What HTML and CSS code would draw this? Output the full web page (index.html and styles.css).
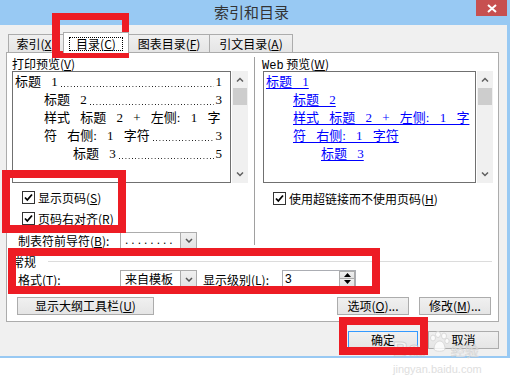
FILE: index.html
```html
<!DOCTYPE html>
<html lang="zh-CN">
<head>
    <meta charset="UTF-8" />
    <title>索引和目录</title>
    <link rel="stylesheet" href="styles.css">
</head>
<body>
<div class="window">
    <div class="titlebar">
        <span class="title">索引和目录</span>
        <span class="close">
            <svg width="10" height="9" viewBox="0 0 10 9"><path d="M1 1 L9 8 M9 1 L1 8" stroke="#fff" stroke-width="2"/></svg>
        </span>
    </div>
    <div class="client">
        <div class="tabs">
            <div class="tab tab-index">索引(<u>X</u>)</div>
            <div class="tab tab-toc active"><span class="focus">目录(<u>C</u>)</span></div>
            <div class="tab tab-figures">图表目录(<u>F</u>)</div>
            <div class="tab tab-cites">引文目录(<u>A</u>)</div>
        </div>
        <div class="panel">
            <div class="columns">
                <div class="col col-left">
                    <div class="caption">打印预览(<u>V</u>)</div>
                    <div class="listbox">
                        <div class="list list-print">
                            <div class="toc lv1"><span>标题 1</span><span class="leader"></span><span>1</span></div>
                            <div class="toc lv2"><span>标题 2</span><span class="leader"></span><span>3</span></div>
                            <div class="toc lv2">样式 标题 2 + 左侧: 1 字</div>
                            <div class="toc lv2"><span>符 右侧: 1 字符</span><span class="leader"></span><span>3</span></div>
                            <div class="toc lv3"><span>标题 3</span><span class="leader"></span><span>5</span></div>
                        </div>
                        <div class="scrollbar">
                            <div class="sb-btn"><svg width="8" height="5" viewBox="0 0 8 5"><path d="M1 4.5 L4 1.5 L7 4.5" fill="none" stroke="#606060" stroke-width="1.5"/></svg></div>
                            <div class="sb-thumb"></div>
                            <div class="sb-space"></div>
                            <div class="sb-btn"><svg width="8" height="5" viewBox="0 0 8 5"><path d="M1 0.5 L4 3.5 L7 0.5" fill="none" stroke="#606060" stroke-width="1.5"/></svg></div>
                        </div>
                    </div>
                    <div class="checks">
                        <div class="check">
                            <svg width="13" height="13" viewBox="0 0 13 13"><rect x="0.5" y="0.5" width="12" height="12" fill="#fff" stroke="#333"/><path d="M3 6.5 L5.3 9 L10 3.5" fill="none" stroke="#000" stroke-width="1.8"/></svg>
                            <span>显示页码(<u>S</u>)</span>
                        </div>
                        <div class="check">
                            <svg width="13" height="13" viewBox="0 0 13 13"><rect x="0.5" y="0.5" width="12" height="12" fill="#fff" stroke="#333"/><path d="M3 6.5 L5.3 9 L10 3.5" fill="none" stroke="#000" stroke-width="1.8"/></svg>
                            <span>页码右对齐(<u>R</u>)</span>
                        </div>
                    </div>
                    <div class="field">
                        <span class="field-label">制表符前导符(<u>B</u>):</span>
                        <div class="combo">
                            <span class="combo-text dots">........</span>
                            <span class="combo-btn"><svg width="8" height="5" viewBox="0 0 8 5"><path d="M1 1 L4 4 L7 1" fill="none" stroke="#555" stroke-width="1.5"/></svg></span>
                        </div>
                    </div>
                </div>
                <div class="vsep"></div>
                <div class="col col-right">
                    <div class="caption caption-web"><span class="mono">Web</span> 预览(<u>W</u>)</div>
                    <div class="listbox">
                        <div class="list list-web">
                            <div class="toc lv1"><a>标题 1</a></div>
                            <div class="toc web2"><a>标题 2</a></div>
                            <div class="toc web2"><a>样式 标题 2 + 左侧: 1 字</a></div>
                            <div class="toc web2"><a>符 右侧: 1 字符</a></div>
                            <div class="toc web3"><a>标题 3</a></div>
                        </div>
                        <div class="scrollbar">
                            <div class="sb-btn"><svg width="8" height="5" viewBox="0 0 8 5"><path d="M1 4.5 L4 1.5 L7 4.5" fill="none" stroke="#606060" stroke-width="1.5"/></svg></div>
                            <div class="sb-thumb"></div>
                            <div class="sb-space"></div>
                            <div class="sb-btn"><svg width="8" height="5" viewBox="0 0 8 5"><path d="M1 0.5 L4 3.5 L7 0.5" fill="none" stroke="#606060" stroke-width="1.5"/></svg></div>
                        </div>
                    </div>
                    <div class="checks checks-web">
                        <div class="check">
                            <svg width="13" height="13" viewBox="0 0 13 13"><rect x="0.5" y="0.5" width="12" height="12" fill="#fff" stroke="#333"/><path d="M3 6.5 L5.3 9 L10 3.5" fill="none" stroke="#000" stroke-width="1.8"/></svg>
                            <span>使用超链接而不使用页码(<u>H</u>)</span>
                        </div>
                    </div>
                </div>
            </div>

            <div class="group">
                <span>常规</span>
                <div class="group-line"></div>
            </div>
            <div class="field format">
                <span class="field-label">格式(<u>T</u>):</span>
                <div class="combo">
                    <span class="combo-text">来自模板</span>
                    <span class="combo-btn"><svg width="8" height="5" viewBox="0 0 8 5"><path d="M1 1 L4 4 L7 1" fill="none" stroke="#555" stroke-width="1.5"/></svg></span>
                </div>
                <span class="field-label level-label">显示级别(<u>L</u>):</span>
                <div class="spin">
                    <span class="spin-text">3</span>
                    <span class="spin-btns">
                        <span class="spin-btn"><svg width="7" height="4" viewBox="0 0 7 4"><path d="M0 4 L3.5 0 L7 4Z" fill="#000"/></svg></span>
                        <span class="spin-btn"><svg width="7" height="4" viewBox="0 0 7 4"><path d="M0 0 L3.5 4 L7 0Z" fill="#000"/></svg></span>
                    </span>
                </div>
            </div>
            <div class="buttons">
                <div class="btn btn-outline">显示大纲工具栏(<u>U</u>)</div>
                <div class="btn btn-small push">选项(<u>O</u>)...</div>
                <div class="btn btn-small">修改(<u>M</u>)...</div>
            </div>
        </div>
        <div class="dialog-buttons">
            <div class="btn btn-ok default">确定</div>
            <div class="btn btn-cancel">取消</div>
        </div>
    </div>
</div>

<div class="watermark">
    <div class="wm-logo">
        <span class="wm-bai">Bai</span>
        <svg width="24" height="24" viewBox="0 0 24 24" class="wm-paw">
            <g fill="#fff" stroke="#d6d6d6" stroke-width="1">
                <ellipse cx="6" cy="8" rx="2.5" ry="3"/>
                <ellipse cx="11" cy="4.5" rx="2.5" ry="3"/>
                <ellipse cx="17" cy="6" rx="2.5" ry="3"/>
                <ellipse cx="20" cy="11" rx="2.2" ry="2.6"/>
                <path d="M7 19 C7 13 11 11 13 11 C16 11 18 15 18 19 C18 22 7 22 7 19Z"/>
            </g>
        </svg>
        <span class="wm-jy">经验</span>
    </div>
    <div class="wm-url">jingyan.baidu.com</div>
</div>

<div class="mark mark-tab"></div>
<div class="mark mark-checks"></div>
<div class="mark mark-general"></div>
<div class="mark mark-ok"></div>
</body>
</html>
```

FILE: styles.css
```css
* {
    box-sizing: border-box;
}
body {
    margin: 0;
    width: 514px;
    height: 389px;
    overflow: hidden;
    position: relative;
    background: #fff;
    font-family: "Noto Sans CJK SC", "Liberation Sans", sans-serif;
    font-size: 12px;
    color: #000;
}
u {
    text-decoration: underline;
    text-underline-offset: 1px;
}
.window {
    width: 510px;
    height: 358px;
    background: #98c9f3;
    padding: 0 3px 2px 0;
    display: flex;
    flex-direction: column;
}
.titlebar {
    height: 25px;
    flex: none;
    position: relative;
    display: flex;
    justify-content: center;
}
.title {
    font-size: 15px;
    line-height: 24px;
    color: #333;
    margin-left: -4px;
}
.close {
    position: absolute;
    top: 0;
    right: 0;
    width: 31px;
    height: 16px;
    background: #c75050;
    display: flex;
    align-items: center;
    justify-content: center;
}
.client {
    flex: 1;
    background: #f0f0f0;
    padding: 7px 8px 0 6px;
}

/* tabs */
.tabs {
    display: flex;
    align-items: flex-end;
    height: 20px;
    padding-left: 3px;
}
.tab {
    height: 18px;
    border: 1px solid #acacac;
    border-bottom: none;
    background: linear-gradient(#f0f0f0, #e5e5e5);
    margin-left: -1px;
    line-height: 17px;
    text-align: center;
    white-space: nowrap;
    overflow: hidden;
}
.tab-index { width: 56px; }
.tab-toc { width: 66px; }
.tab-figures { width: 82px; }
.tab-cites { width: 84px; }
.tab.active {
    height: 21px;
    background: #fff;
    margin-bottom: -1px;
    position: relative;
    z-index: 1;
    display: flex;
    align-items: center;
    justify-content: center;
}
.focus {
    border: 1px dotted #000;
    line-height: 12px;
    height: 14px;
    padding: 0 6px;
    margin-top: 2px;
}

/* panel */
.panel {
    height: 270px;
    border: 1px solid #acacac;
    background: #fff;
    padding: 3px 5px 0;
}
.columns {
    display: flex;
}
.col-left {
    width: 236px;
}
.col-right {
    width: 230px;
}
.vsep {
    width: 1px;
    background: #a0a0a0;
    margin: 1px 8px 4px 6px;
}
.caption {
    height: 15px;
    line-height: 15px;
    white-space: nowrap;
}
.caption-web {
    margin-left: -1px;
}
.mono {
    font-family: "Liberation Mono", monospace;
    font-size: 12px;
}
.listbox {
    display: flex;
    gap: 1px;
    height: 112px;
}
.list {
    border: 1px solid #707070;
    padding: 1px 8px 0 2px;
    font-family: "Liberation Serif", "Noto Sans CJK SC", serif;
    font-size: 13px;
    line-height: 18px;
    word-spacing: 7px;
    white-space: nowrap;
}
.list-print {
    width: 219px;
}
.list-web {
    width: 213px;
    padding-right: 2px;
}
.toc {
    display: flex;
    height: 18px;
}
.lv2 { padding-left: 29px; }
.lv3 { padding-left: 58px; }
.web2 { padding-left: 27px; }
.web3 { padding-left: 55px; }
.leader {
    flex: 1;
    min-width: 0;
    margin: 0 2px;
    background-image: linear-gradient(to right, #000 1px, transparent 1px);
    background-size: 3.25px 1px;
    background-repeat: repeat-x;
    background-position: 1px 13px;
}
.list-web a {
    color: #0000ff;
    text-decoration: underline;
    text-underline-offset: 2px;
}
.scrollbar {
    width: 16px;
    background: #f0f0f0;
    display: flex;
    flex-direction: column;
}
.sb-btn {
    height: 17px;
    display: flex;
    align-items: center;
    justify-content: center;
}
.sb-thumb {
    height: 17px;
    margin: 0 1px;
    background: #cdcdcd;
}
.sb-space {
    flex: 1;
}

/* checkboxes */
.checks {
    margin-top: 4px;
}
.checks-web {
    margin-top: 5px;
}
.check {
    display: flex;
    align-items: center;
    gap: 3px;
    height: 21px;
    padding-left: 10px;
    white-space: nowrap;
}

/* fields */
.field {
    display: flex;
    align-items: center;
    height: 18px;
    margin-top: 2px;
    padding-left: 6px;
    white-space: nowrap;
}
.field-label {
    width: 102px;
}
.level-label {
    width: 79px;
    margin-left: 6px;
}
.combo {
    width: 77px;
    height: 17px;
    border: 1px solid #acacac;
    background: #fff;
    display: flex;
}
.format .combo {
    height: 18px;
}
.combo-text {
    flex: 1;
    padding-left: 4px;
    line-height: 15px;
}
.dots {
    font-family: "Liberation Sans", sans-serif;
    letter-spacing: 3px;
}
.combo-btn {
    width: 16px;
    border-left: 1px solid #acacac;
    background: linear-gradient(#f0f0f0, #e2e2e2);
    display: flex;
    align-items: center;
    justify-content: center;
}
.spin {
    width: 74px;
    height: 18px;
    margin-top: -1px;
    border: 1px solid #abadb3;
    background: #fff;
    display: flex;
}
.spin-text {
    flex: 1;
    padding-left: 2px;
    line-height: 16px;
    font-family: "Liberation Sans", sans-serif;
}
.spin-btns {
    width: 16px;
    display: flex;
    flex-direction: column;
}
.spin-btn {
    flex: 1;
    border: 1px solid #acacac;
    background: linear-gradient(#f0f0f0, #e2e2e2);
    display: flex;
    align-items: center;
    justify-content: center;
}
.spin-btn + .spin-btn {
    border-top: none;
}

/* group */
.group {
    display: flex;
    align-items: center;
    height: 14px;
    margin-top: 5px;
}
.group-line {
    flex: 1;
    height: 1px;
    background: #dcdcdc;
    margin: 0 1px 0 12px;
}

/* buttons */
.buttons {
    display: flex;
    gap: 10px;
    margin-top: 9px;
    padding: 0 2px 0 5px;
}
.btn {
    height: 18px;
    border: 1px solid #acacac;
    background: linear-gradient(#f0f0f0, #e5e5e5);
    line-height: 16px;
    text-align: center;
    white-space: nowrap;
}
.btn-outline { width: 137px; }
.btn-small { width: 72px; }
.push { margin-left: auto; }
.dialog-buttons {
    display: flex;
    justify-content: flex-end;
    gap: 10px;
    margin-top: 9px;
}
.btn-ok { width: 70px; }
.btn-cancel { width: 71px; }
.btn.default {
    border-color: #3399ff;
}

/* watermark */
.watermark {
    position: absolute;
    left: 393px;
    top: 326px;
    width: 96px;
}
.wm-logo {
    display: flex;
    align-items: flex-end;
    height: 34px;
}
.wm-bai {
    font-family: "Liberation Sans", sans-serif;
    font-weight: bold;
    font-size: 21px;
    line-height: 22px;
    color: rgba(255, 255, 255, 0.55);
    -webkit-text-stroke: 1px rgba(190, 190, 190, 0.6);
}
.wm-paw {
    margin: 0 0 6px 1px;
    opacity: 0.8;
}
.wm-jy {
    font-size: 14px;
    line-height: 20px;
    color: rgba(255, 255, 255, 0.6);
    -webkit-text-stroke: 0.6px rgba(190, 190, 190, 0.6);
}
.wm-url {
    font-family: "Liberation Sans", sans-serif;
    font-size: 11px;
    color: #dedede;
    margin-top: 3px;
}

/* red annotation boxes */
.mark {
    position: absolute;
    border: 8px solid #ed1c24;
}
.mark-tab {
    left: 52px;
    top: 13px;
    width: 77px;
    height: 45px;
    border-width: 7px 7px 7px 8px;
}
.mark-checks {
    left: 2px;
    top: 170px;
    width: 124px;
    height: 63px;
}
.mark-general {
    left: 8px;
    top: 248px;
    width: 372px;
    height: 46px;
}
.mark-ok {
    left: 339px;
    top: 317px;
    width: 89px;
    height: 38px;
}
```
